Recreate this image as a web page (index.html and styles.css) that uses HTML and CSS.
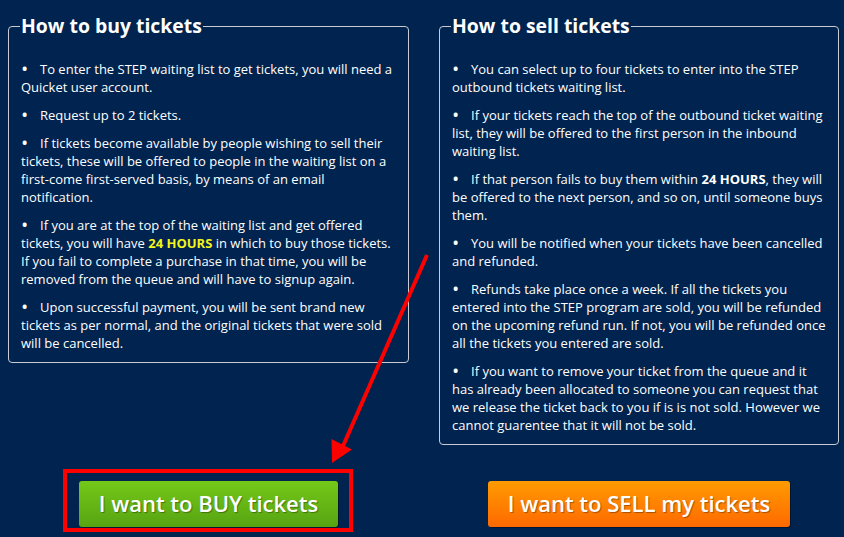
FILE: index.html
```html
<!DOCTYPE html>
<html lang="en">
<head>
<meta charset="utf-8">
<title>STEP tickets</title>
<link rel="stylesheet" href="styles.css">
</head>
<body>
<div class="page">
  <div class="grid">
    <fieldset class="panel">
      <legend>How to buy tickets</legend>
      <p>To enter the STEP waiting list to get tickets, you will need a Quicket user account.</p>
      <p>Request up to 2 tickets.</p>
      <p>If tickets become available by people wishing to sell their tickets, these will be offered to people in the waiting list on a first-come first-served basis, by means of an email notification.</p>
      <p>If you are at the top of the waiting list and get offered tickets, you will have <strong class="hl">24 HOURS</strong> in which to buy those tickets. If you fail to complete a purchase in that time, you will be removed from the queue and will have to signup again.</p>
      <p>Upon successful payment, you will be sent brand new tickets as per normal, and the original tickets that were sold will be cancelled.</p>
    </fieldset>
    <fieldset class="panel">
      <legend>How to sell tickets</legend>
      <p>You can select up to four tickets to enter into the STEP outbound tickets waiting list.</p>
      <p>If your tickets reach the top of the outbound ticket waiting list, they will be offered to the first person in the inbound waiting list.</p>
      <p>If that person fails to buy them within <strong>24 HOURS</strong>, they will be offered to the next person, and so on, until someone buys them.</p>
      <p>You will be notified when your tickets have been cancelled and refunded.</p>
      <p>Refunds take place once a week. If all the tickets you entered into the STEP program are sold, you will be refunded on the upcoming refund run. If not, you will be refunded once all the tickets you entered are sold.</p>
      <p>If you want to remove your ticket from the queue and it has already been allocated to someone you can request that we release the ticket back to you if is is not sold. However we cannot guarentee that it will not be sold.</p>
    </fieldset>
    <div class="action">
      <a class="btn btn-buy" href="#">I want to BUY tickets</a>
    </div>
    <div class="action">
      <a class="btn btn-sell" href="#">I want to SELL my tickets</a>
    </div>
  </div>
  <div class="highlight-box"></div>
  <svg class="annotation" width="844" height="537" viewBox="0 0 844 537" aria-hidden="true">
    <line x1="427" y1="255" x2="343" y2="446" stroke="#ff0000" stroke-width="4"/>
    <polygon points="332,463 331.5,439 352,449.5" fill="#ff0000"/>
  </svg>
</div>
</body>
</html>
```
FILE: styles.css
```css
html, body {
  margin: 0;
  padding: 0;
}
body {
  background: #00234f;
  color: #ffffff;
  font-family: "Open Sans", "Liberation Sans", Arial, sans-serif;
  font-size: 13px;
  line-height: 18px;
  width: 844px;
  height: 537px;
  overflow: hidden;
}
.page {
  position: relative;
  width: 844px;
  height: 537px;
}
.grid {
  display: grid;
  grid-template-columns: 401px 400px;
  column-gap: 30px;
  padding-left: 8px;
  padding-top: 12px;
}
.panel {
  margin: 0;
  border: 1px solid #c8ccd2;
  border-radius: 4px;
  padding: 0 11px 0 12px;
  min-width: 0;
  align-self: start;
}
.panel legend {
  font-size: 19.4px;
  font-weight: 700;
  line-height: 28px;
  padding: 0 1px;
  margin-left: -1px;
}
.panel p {
  margin: 10px 0;
}
.panel p:first-of-type {
  margin-top: 20px;
}
.panel p::before {
  content: "\2022";
  display: inline-block;
  width: 19px;
  padding-left: 1px;
  box-sizing: border-box;
  font-weight: 700;
  font-size: 14px;
}
.hl {
  color: #f4f41c;
}
.action {
  display: flex;
  justify-content: center;
  padding-top: 36px;
}
.btn {
  display: inline-block;
  height: 46px;
  line-height: 44px;
  padding: 0 20px;
  box-sizing: border-box;
  border-radius: 3px;
  color: #ffffff;
  text-decoration: none;
  font-size: 22px;
  font-weight: 600;
  text-shadow: 1px 1px 1px rgba(0, 0, 0, 0.35);
  box-shadow: 1px 1px 0 rgba(0, 0, 0, 0.35);
}
.btn-buy {
  background: linear-gradient(#74c818, #57a412);
}
.btn-sell {
  background: linear-gradient(#ff9b00, #ff6900);
}
.highlight-box {
  position: absolute;
  left: 63px;
  top: 469px;
  width: 282px;
  height: 55px;
  border: 4px solid #ff0000;
}
.annotation {
  position: absolute;
  left: 0;
  top: 0;
  pointer-events: none;
}
```
